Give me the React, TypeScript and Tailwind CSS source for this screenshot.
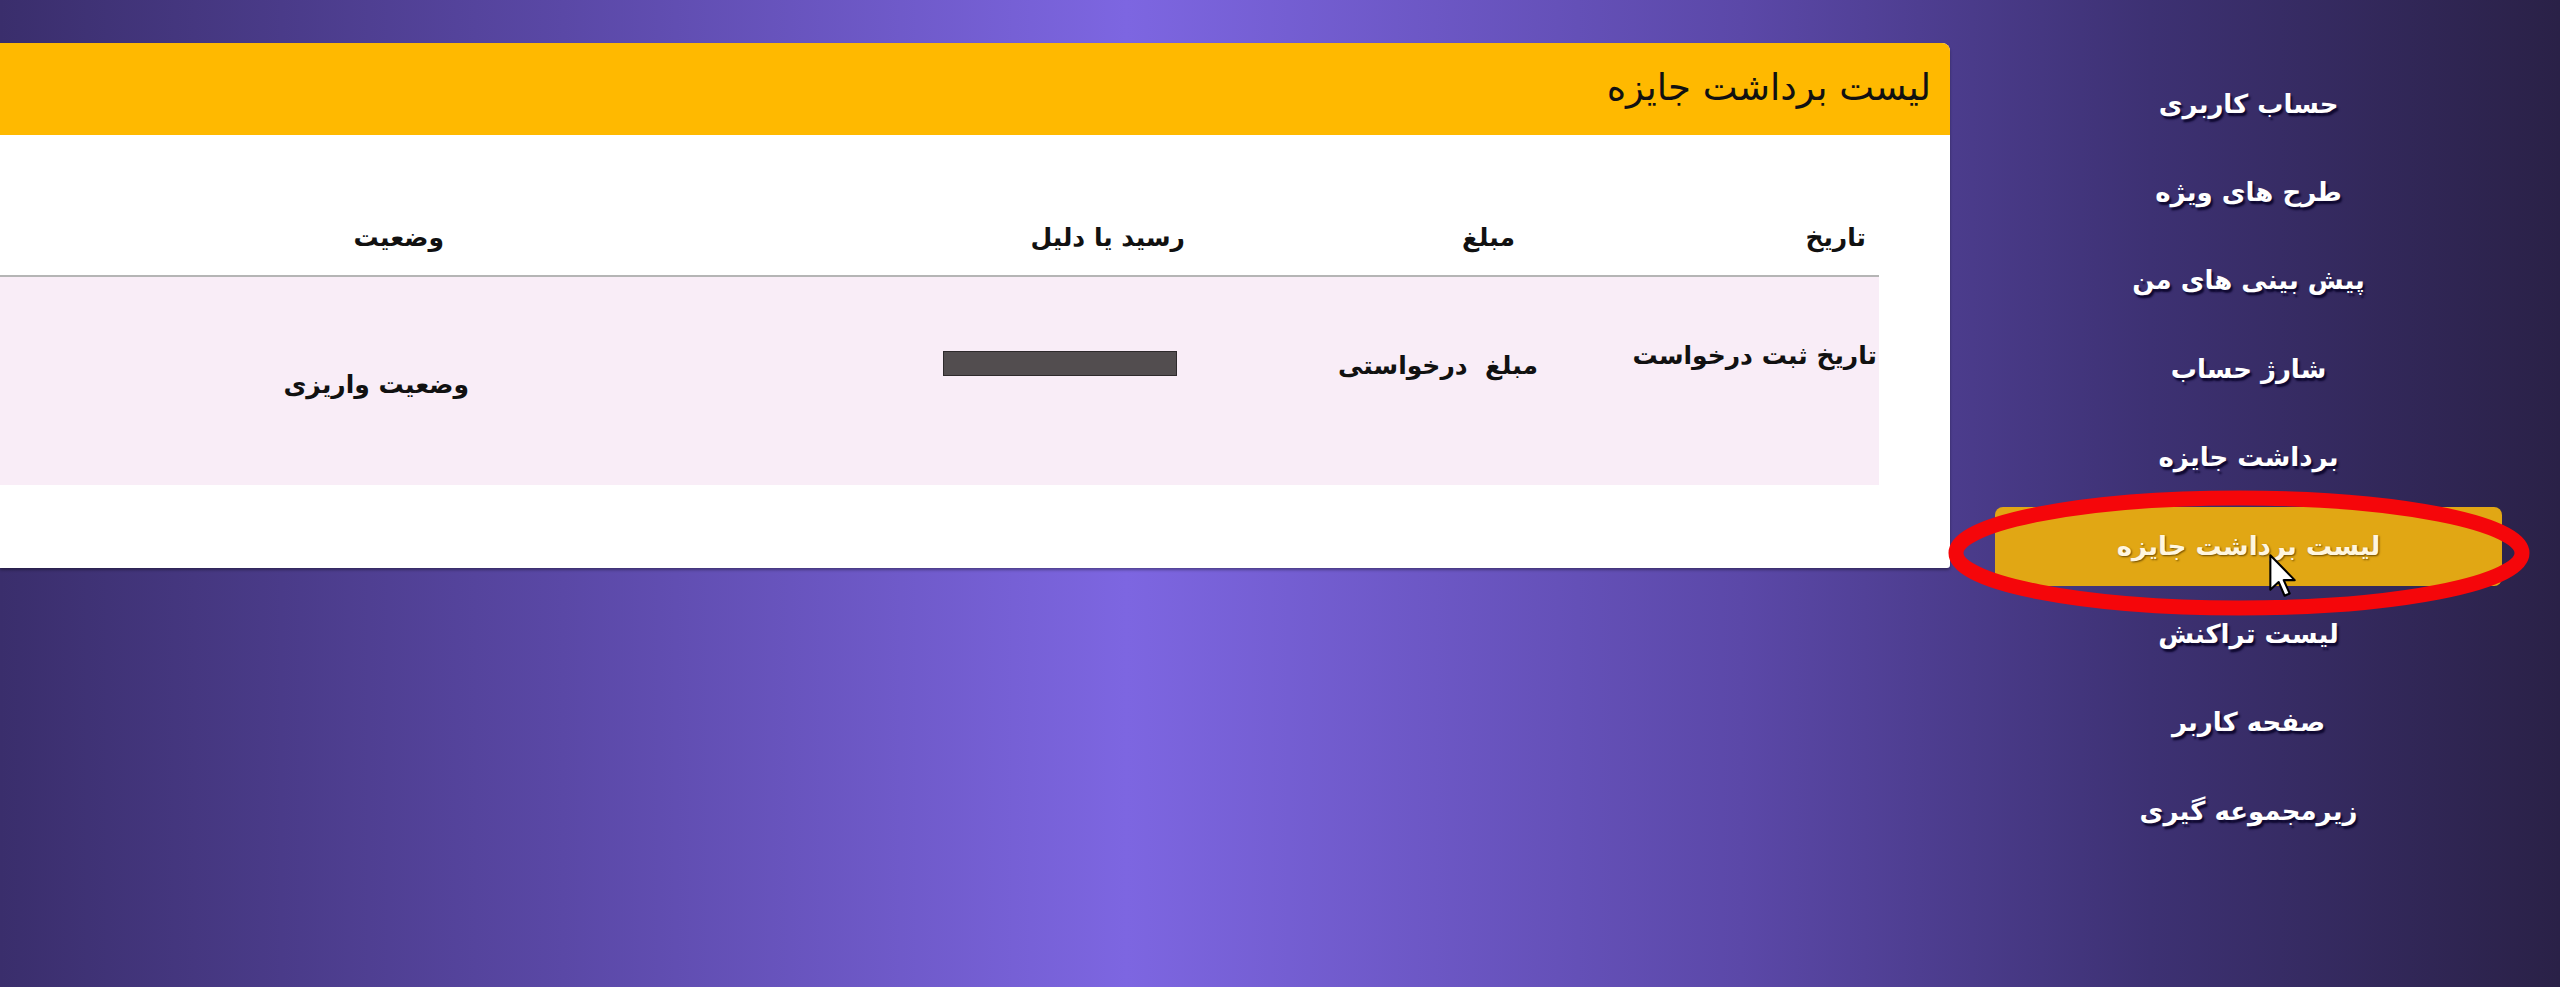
const menu = [
  'حساب کاربری',
  'طرح های ویژه',
  'پیش بینی های من',
  'شارژ حساب',
  'برداشت جایزه',
  'لیست برداشت جایزه',
  'لیست تراکنش',
  'صفحه کاربر',
  'زیرمجموعه گیری',
];

function Cursor() {
  return (
    <svg className="absolute left-[2268px] top-[553px]" width="30" height="46" viewBox="0 0 13 20">
      <path d="M1 1 L1 16 L4.6 12.6 L7.2 18.6 L9.4 17.6 L6.8 11.8 L11.6 11.8 Z" fill="#fff" stroke="#000" strokeWidth="0.9" strokeLinejoin="round" />
    </svg>
  );
}

function Highlight() {
  return (
    <svg className="pointer-events-none absolute left-[1946px] top-[490px]" width="590" height="126" viewBox="0 0 590 126">
      <ellipse cx="293" cy="63" rx="283" ry="55" fill="none" stroke="#f5060a" strokeWidth="15" />
    </svg>
  );
}

function Sidebar() {
  return (
    <nav className="flex w-[610px] shrink-0 flex-col pt-[60px] pr-[58px] pl-[45px]">
      {menu.map((item) => {
        const active = item === 'لیست برداشت جایزه';
        return (
          <div key={item} className="flex h-[88.4px] items-center">
            <a
              className={
                active
                  ? 'flex h-[79px] w-full items-center justify-center rounded-[8px] bg-[#e1a714] text-[26px] font-bold text-[#fff6e0] [text-shadow:1px_1px_2px_#6b4a00]'
                  : 'flex h-[79px] w-full items-center justify-center text-[26px] font-bold text-white [text-shadow:2px_3px_2px_#0e0830]'
              }
            >
              {item}
            </a>
          </div>
        );
      })}
    </nav>
  );
}

function Card() {
  return (
    <div className="mt-[43px] h-[525px] w-full rounded-tr-[8px] rounded-br-[3px] bg-white shadow-[0_2px_3px_rgba(0,0,0,0.35)]">
      <div className="flex h-[92px] items-center rounded-tr-[8px] bg-[#ffb900] pr-[19px] pb-[2px]">
        <h1 className="text-[37px] leading-[44px] text-[#111]">لیست برداشت جایزه</h1>
      </div>
      <div className="mr-[71px]">
        {/* header */}
        <div className="flex h-[142px] items-end border-b-2 border-[#b5b5b5] pb-[20px] text-[25px] font-bold leading-[34px] text-[#111]">
          <div className="w-[339px] pr-[13px]">تاریخ</div>
          <div className="w-[350px] pr-[25px]">مبلغ</div>
          <div className="w-[710px] pr-[5px]">رسید یا دلیل</div>
          <div className="flex-1 pr-[36px]">وضعیت</div>
        </div>
        {/* row */}
        <div className="flex h-[208px] items-start bg-[#f9edf7] text-[25px] font-bold leading-[34px] text-[#111]">
          <div className="w-[339px] pt-[62px] pr-[2px]">تاریخ ثبت درخواست</div>
          <div className="w-[350px] pt-[72px] pr-[2px]">مبلغ&nbsp; درخواستی</div>
          <div className="w-[710px] pt-[74px] pr-[13px]">
            <div className="h-[25px] w-[234px] border border-[#2e2a2c] bg-[#524d4f]" />
          </div>
          <div className="flex-1 pt-[91px] pr-[11px]">وضعیت واریزی</div>
        </div>
      </div>
    </div>
  );
}

export default function App() {
  return (
    <div
      dir="rtl"
      className="relative flex h-[987px] w-[2560px] overflow-hidden bg-[linear-gradient(90deg,#3a2e6c_0%,#5a48a6_22%,#7d66e1_44%,#5b48a8_68%,#3d3173_84%,#2a2147_100%)] font-['DejaVu_Sans',sans-serif]"
    >
      <Sidebar />
      <div className="flex-1">
        <Card />
      </div>
      <Highlight />
      <Cursor />
    </div>
  );
}
